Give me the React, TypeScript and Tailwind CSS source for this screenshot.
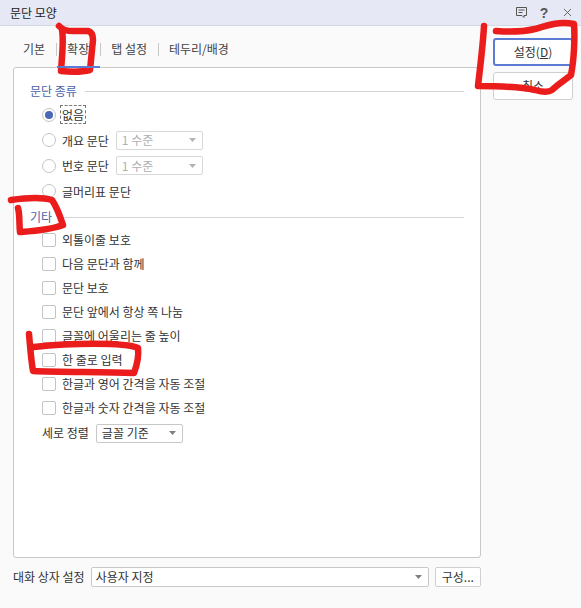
import { X } from "lucide-react";

const FONT = { fontFamily: '"Noto Sans CJK KR", "Noto Sans", sans-serif' };

function Caret({ muted }: { muted?: boolean }) {
  return (
    <svg width="7" height="4" viewBox="0 0 7 4" className="shrink-0">
      <path d="M0 0h7L3.5 4z" fill={muted ? "#b4b4b4" : "#808080"} />
    </svg>
  );
}

function Radio({ label, checked, focused }: { label: string; checked?: boolean; focused?: boolean }) {
  return (
    <div className="flex items-center">
      <span className="flex h-[14px] w-[14px] items-center justify-center rounded-full border border-[#c4c4c4] bg-white">
        {checked && <span className="h-2 w-2 rounded-full bg-[#4a68b5]" />}
      </span>
      <span className={`ml-[5px] px-px leading-[17px] ${focused ? "outline-1 outline-dashed outline-[#777]" : ""}`}>
        {label}
      </span>
    </div>
  );
}

function LevelSelect() {
  return (
    <div className="ml-[6px] flex h-[19px] w-[87px] items-center justify-between rounded-[2px] border border-[#d8d8d8] bg-white pl-[5px] pr-[6px] text-[#b0b0b0]">
      <span>1 수준</span>
      <Caret muted />
    </div>
  );
}

function Check({ label }: { label: string }) {
  return (
    <div className="flex h-6 items-center">
      <span className="h-[14px] w-[14px] rounded-[2px] border border-[#c4c4c4] bg-white" />
      <span className="ml-[6px]">{label}</span>
    </div>
  );
}

function GroupTitle({ title }: { title: string }) {
  return (
    <div className="flex h-[18px] items-center">
      <span className="text-[#4a62a8]">{title}</span>
      <span className="ml-2 h-px flex-1 bg-[#d4d4d4]" />
    </div>
  );
}

function Tabs() {
  const tabs = ["기본", "확장", "탭 설정", "테두리/배경"];
  return (
    <div className="relative z-10 -mb-px -ml-px flex h-[42px] items-start pl-[0.5px] pt-[14px]">
      {tabs.map((t, i) => (
        <div key={t} className="flex items-start">
          {i > 0 && <span className="mt-[3px] h-[13px] w-px bg-[#c8c8c8]" />}
          <div
            className={`h-[28px] px-[10.5px] leading-[18px] text-[#444] ${i === 1 ? "border-b-2 border-[#5b7bd5]" : ""}`}
          >
            {t}
          </div>
        </div>
      ))}
    </div>
  );
}

export default function App() {
  return (
    <div className="relative h-[608px] w-[581px] overflow-hidden bg-[#fafafa] text-[12px] text-[#333]" style={FONT}>
      {/* title bar */}
      <div className="flex h-[26px] items-center justify-between border-b border-[#d3d7e6] bg-[#e6e9f5] pl-[10px] pr-[7px] text-[#222]">
        <span>문단 모양</span>
        <div className="flex items-center text-[#555]">
          <svg width="13" height="13" viewBox="0 0 13 13" fill="none" stroke="currentColor" strokeWidth="1">
            <path d="M1.5 1.5h10v8H9v2l-2-2H1.5z" strokeLinejoin="round" />
            <path d="M3.5 4h6M3.5 6.5h4" />
          </svg>
          <span className="ml-[11px] w-[10px] text-center text-[14px] font-bold leading-none" style={{ fontFamily: '"Liberation Sans", sans-serif' }}>?</span>
          <X className="ml-[12px]" size={13} strokeWidth={1.6} />
        </div>
      </div>

      <div className="flex">
        {/* left column */}
        <div className="w-[481px] pl-[13px]">
          <Tabs />
          <div className="h-[491px] rounded-[3px] border border-[#c8c8c8] bg-white pl-[16px] pr-4 pt-[14px]">
            <GroupTitle title="문단 종류" />
            <div className="ml-[12px] mt-[2px] flex flex-col">
              <div className="flex h-[25px] items-center"><Radio label="없음" checked focused /></div>
              <div className="flex h-[26px] items-center"><Radio label="개요 문단" /><LevelSelect /></div>
              <div className="flex h-[25px] items-center"><Radio label="번호 문단" /><LevelSelect /></div>
              <div className="flex h-[26px] items-center"><Radio label="글머리표 문단" /></div>
            </div>
            <div className="mt-[4px]">
              <GroupTitle title="기타" />
            </div>
            <div className="ml-[12px] mt-[2px] flex flex-col">
              <Check label="외톨이줄 보호" />
              <Check label="다음 문단과 함께" />
              <Check label="문단 보호" />
              <Check label="문단 앞에서 항상 쪽 나눔" />
              <Check label="글꼴에 어울리는 줄 높이" />
              <Check label="한 줄로 입력" />
              <Check label="한글과 영어 간격을 자동 조절" />
              <Check label="한글과 숫자 간격을 자동 조절" />
              <div className="mt-[2px] flex h-[22px] items-center">
                <span>세로 정렬</span>
                <div className="ml-[7px] flex h-[19px] w-[87px] items-center justify-between rounded-[2px] border border-[#c8c8c8] bg-white pl-[5px] pr-[6px]">
                  <span>글꼴 기준</span>
                  <Caret />
                </div>
              </div>
            </div>
          </div>

          {/* footer */}
          <div className="mt-[9px] flex h-5 items-center">
            <span>대화 상자 설정</span>
            <div className="ml-[6px] flex h-5 w-[338px] items-center justify-between rounded-[2px] border border-[#c8c8c8] bg-white pl-[4px] pr-[6px]">
              <span>사용자 지정</span>
              <Caret />
            </div>
            <div className="ml-[6px] flex h-5 flex-1 items-center justify-center rounded-[2px] border border-[#d0d0d0] bg-white">
              구성...
            </div>
          </div>
        </div>

        {/* action buttons */}
        <div className="ml-[12px] flex w-[80px] flex-col pt-[12px]">
          <div className="flex h-[28px] items-center justify-center rounded-[3px] border-2 border-[#5b7bd5] bg-white">
            <span>설정(<span className="underline">D</span>)</span>
          </div>
          <div className="mt-[6px] flex h-[28px] items-center justify-center rounded-[3px] border border-[#cfcfcf] bg-white">
            취소
          </div>
        </div>
      </div>

      {/* red marker annotations */}
      <svg className="pointer-events-none absolute left-0 top-0" width="581" height="608" fill="none" stroke="#ea1c1c" strokeWidth="6.5" strokeLinecap="round" strokeLinejoin="round">
        <path d="M59 26C63 30 66 31 74 31L88 31C92 32 93 35 93 40C92 50 91 60 90 70C82 72 72 72 61 71C62 55 64 40 62 30" />
        <path d="M11 200C25 198 42 197 52 200C57 207 60 216 63 225C50 230 34 231 20 232C19 224 20 215 18 208" />
        <path d="M484 26C483 45 480 68 478 86C500 86 520 87 535 90C542 92 548 93 552 90C558 84 565 80 571 75C574 60 575 38 574 24C560 21 548 25 535 29C522 32 508 32 496 31" />
        <path d="M29 334C30 345 31 360 33 371C60 372 100 372 134 373C137 365 139 356 138 348C125 342 70 343 34 347" />
      </svg>
    </div>
  );
}
